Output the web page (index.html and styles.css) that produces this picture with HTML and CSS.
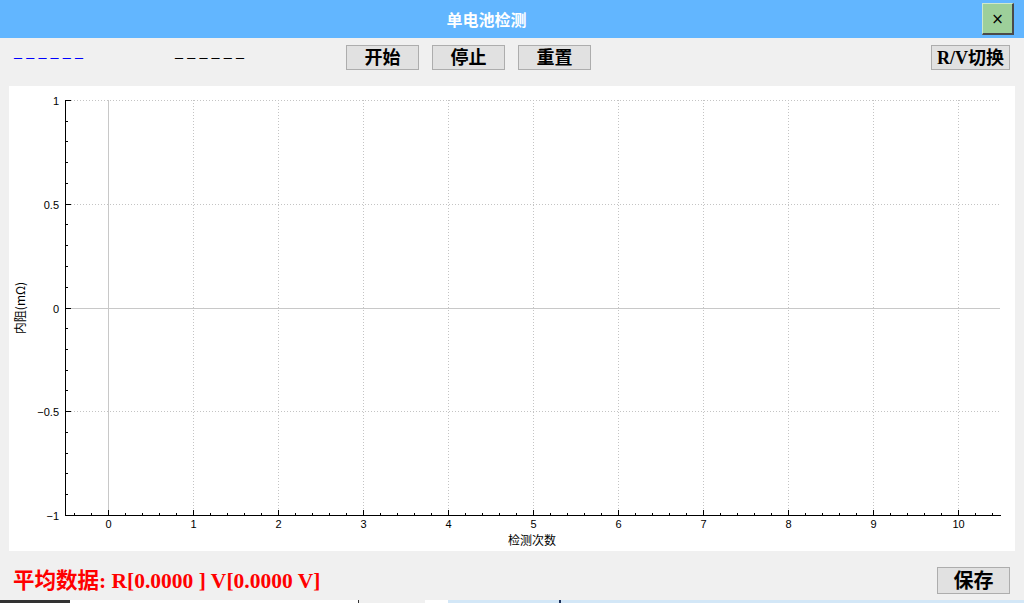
FILE: index.html
```html
<!DOCTYPE html>
<html lang="zh-CN">
<head>
<meta charset="utf-8">
<title>单电池检测</title>
<link rel="stylesheet" href="styles.css">
</head>
<body>
<div class="window">
  <header class="titlebar">
    <div class="title">单电池检测</div>
    <button class="close">×</button>
  </header>
  <div class="toolbar">
    <span class="dash-box dash-r"><span class="dash">------</span></span>
    <span class="dash-box dash-v"><span class="dash">------</span></span>
    <button class="btn">开始</button>
    <button class="btn">停止</button>
    <button class="btn">重置</button>
    <button class="btn btn-rv">R/V切换</button>
  </div>
  <div class="chart">
    <svg class="plot" width="1006" height="465" viewBox="0 0 1006 465" xmlns="http://www.w3.org/2000/svg">
      <g class="grid-dot" fill="none" stroke="#c4c4c4" stroke-width="1" stroke-dasharray="1 2" shape-rendering="crispEdges">
        <path d="M184.5 14V429M269.5 14V429M354.5 14V429M439.5 14V429M524.5 14V429M609.5 14V429M694.5 14V429M779.5 14V429M864.5 14V429M949.5 14V429"/>
        <path d="M62 14.5H991M62 118.5H991M62 325.5H991"/>
      </g>
      <g fill="none" stroke="#c8c8c8" stroke-width="1" shape-rendering="crispEdges">
        <path d="M99.5 14V429M62 222.5H991"/>
      </g>
      <g fill="none" stroke="#000" stroke-width="1" shape-rendering="crispEdges">
        <path d="M56.5 14V430M56 429.5H991.5"/>
        <path d="M56 14.5H62M56 35.5H59M56 55.5H59M56 76.5H59M56 97.5H59M56 118.5H62M56 138.5H59M56 159.5H59M56 180.5H59M56 201.5H59M56 222.5H62M56 242.5H59M56 263.5H59M56 284.5H59M56 304.5H59M56 325.5H62M56 346.5H59M56 367.5H59M56 387.5H59M56 408.5H59M56 429.5H62"/>
        <line x1="65" y1="428" x2="991" y2="428" stroke-width="2" stroke-dasharray="1 16"/>
        <line x1="99" y1="426.5" x2="950" y2="426.5" stroke-width="5" stroke-dasharray="1 84"/>
      </g>
      <g class="ylabels" text-anchor="end" dominant-baseline="central">
        <text x="50" y="14.5">1</text>
        <text x="50" y="118.5">0.5</text>
        <text x="50" y="222.5">0</text>
        <text x="50" y="325.5">−0.5</text>
        <text x="50" y="429.5">−1</text>
      </g>
      <g class="xlabels" text-anchor="middle" dominant-baseline="central">
        <text x="99.5" y="438">0</text>
        <text x="184.5" y="438">1</text>
        <text x="269.5" y="438">2</text>
        <text x="354.5" y="438">3</text>
        <text x="439.5" y="438">4</text>
        <text x="524.5" y="438">5</text>
        <text x="609.5" y="438">6</text>
        <text x="694.5" y="438">7</text>
        <text x="779.5" y="438">8</text>
        <text x="864.5" y="438">9</text>
        <text x="949.5" y="438">10</text>
      </g>
      <text class="axis-title" x="523" y="453" text-anchor="middle" dominant-baseline="central">检测次数</text>
      <text class="axis-title" x="0" y="0" text-anchor="middle" dominant-baseline="central" transform="translate(10.5 222) rotate(-90)">内阻(mΩ)</text>
    </svg>
  </div>
  <div class="footer">
    <span class="avg">平均数据: R[0.0000 ] V[0.0000 V]</span>
    <button class="btn btn-save">保存</button>
  </div>
  <div class="taskbar">
    <span class="tb tb-dark"></span>
    <span class="tb tb-white1"></span>
    <span class="tb tb-line"></span>
    <span class="tb tb-gray"></span>
    <span class="tb tb-white2"></span>
    <span class="tb tb-blue1"></span>
    <span class="tb tb-mark"></span>
    <span class="tb tb-blue2"></span>
  </div>
</div>
</body>
</html>
```
FILE: styles.css
```css
* {
  box-sizing: border-box;
}

html, body {
  margin: 0;
  padding: 0;
}

body {
  width: 1024px;
  height: 603px;
  overflow: hidden;
  background: #f0f0f0;
  font-family: "Liberation Serif", "Noto Sans CJK SC", serif;
}

.window {
  display: flex;
  flex-direction: column;
  width: 1024px;
  height: 603px;
}

.titlebar {
  display: flex;
  height: 38px;
  background: #62b6ff;
}

.title {
  flex: 1;
  text-align: center;
  color: #ffffff;
  font-family: "Noto Sans CJK SC", sans-serif;
  font-weight: bold;
  font-size: 16px;
  line-height: 38px;
}

.close {
  width: 32px;
  height: 32px;
  margin: 3px 10px 0 9px;
  padding: 0;
  background: #9dcf9a;
  border: 1px solid;
  border-color: #cfe7cc #4a4a4a #4a4a4a #cfe7cc;
  border-width: 1px 2px 2px 1px;
  color: #000;
  font-family: "DejaVu Sans", sans-serif;
  font-size: 15px;
  line-height: 28px;
}

.toolbar {
  display: flex;
  align-items: center;
  height: 25px;
  margin: 7px 0 16px;
  padding-left: 13px;
}

.dash-box {
  display: flex;
  align-items: center;
  height: 25px;
  overflow: visible;
}

.dash {
  display: inline-block;
  margin-left: -4px;
  font-family: "Liberation Mono", monospace;
  font-size: 30px;
  line-height: 25px;
  letter-spacing: -5.8px;
  transform: scaleY(0.45);
  transform-origin: 50% 60%;
  white-space: nowrap;
}

.dash-r {
  width: 161px;
  color: #0000ff;
}

.dash-v {
  width: 172px;
  color: #000000;
}

.btn {
  width: 73px;
  height: 25px;
  margin-right: 13px;
  padding: 0;
  background: #e1e1e1;
  border: 1px solid #adadad;
  color: #000;
  font-family: "Liberation Serif", "Noto Sans CJK SC", serif;
  font-weight: bold;
  font-size: 18px;
  line-height: 22px;
}

.btn-rv {
  width: 79px;
  margin-left: auto;
  margin-right: 14px;
}

.chart {
  height: 465px;
  margin: 0 9px;
  background: #ffffff;
}

.plot {
  display: block;
}

.ylabels text,
.xlabels text {
  font-family: "Liberation Sans", sans-serif;
  font-size: 11px;
  fill: #000;
}

.axis-title {
  font-family: "Noto Sans CJK SC", sans-serif;
  font-size: 12px;
  fill: #000;
}

.footer {
  display: flex;
  align-items: flex-start;
  height: 49px;
  padding: 16px 14px 0 13px;
}

.avg {
  color: #ff0000;
  font-family: "Liberation Serif", "Noto Sans CJK SC", serif;
  font-weight: bold;
  font-size: 21.5px;
  line-height: 28px;
}

.btn-save {
  width: 73px;
  height: 27px;
  margin-left: auto;
  margin-right: 0;
  font-size: 20px;
  line-height: 24px;
}

.taskbar {
  display: flex;
  height: 3px;
}

.tb {
  height: 3px;
}

.tb-dark { width: 70px; background: #333333; }
.tb-white1 { width: 288px; background: #ffffff; }
.tb-line { width: 1px; background: #333333; }
.tb-gray { width: 66px; background: #f0f0f0; }
.tb-white2 { width: 23px; background: #ffffff; }
.tb-blue1 { width: 111px; background: #d3e7f7; }
.tb-mark { width: 2px; background: #1a2f5a; }
.tb-blue2 { flex: 1; background: #d3e7f7; }
```
